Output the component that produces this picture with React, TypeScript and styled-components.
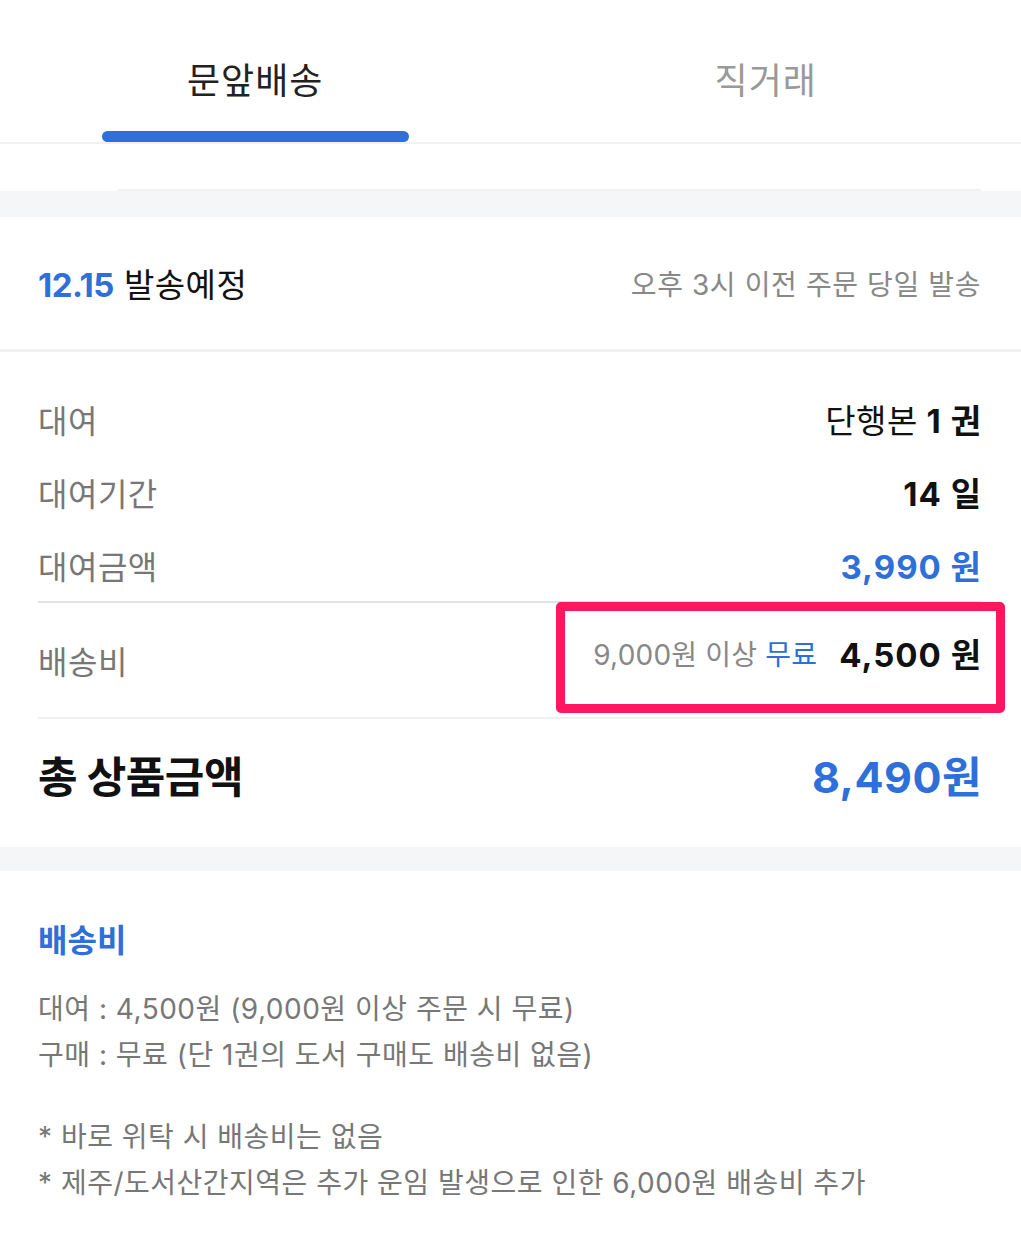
import React from 'react';
import styled, { createGlobalStyle } from 'styled-components';

const GlobalStyle = createGlobalStyle`
  body {
    margin: 0;
    background: #fff;
    font-family: Inter, "Noto Sans CJK KR", sans-serif;
    color: #111;
  }
`

const BLUE = '#2f6fd9'

const Page = styled.div`
  width: 1021px;
  background: #fff;
`

const TabBar = styled.div`
  display: grid;
  grid-template-columns: 1fr 1fr;
  border-bottom: 2px solid #f1f1f3;
`

const Tab = styled.div`
  height: 142px;
  display: flex;
  flex-direction: column;
  align-items: center;
  justify-content: flex-end;
`

const TabLabel = styled.span<{ $active?: boolean }>`
  font-size: 36px;
  letter-spacing: 1px;
  color: ${p => (p.$active ? '#222' : '#999')};
  line-height: 1;
  margin-bottom: 32px;
`

const TabIndicator = styled.div<{ $active?: boolean }>`
  width: 307px;
  height: 11px;
  border-radius: 6px;
  background: ${p => (p.$active ? BLUE : 'transparent')};
`

const TabSpacer = styled.div`
  height: 45px;
  margin-left: 118px;
  margin-right: 40px;
  border-bottom: 2px solid #eef0f3;
`

const Band = styled.div<{ $h: number }>`
  height: ${p => p.$h}px;
  background: #f5f6f8;
`

const ShipRow = styled.div`
  height: 132px;
  padding: 0 40px 0 38px;
  display: flex;
  align-items: center;
  justify-content: space-between;
  border-bottom: 3px solid #f2f2f4;
`

const ShipDate = styled.div`
  font-size: 33px;
  letter-spacing: 0.5px;
  color: #111;
`

const DateNum = styled.span`
  color: ${BLUE};
  font-weight: 700;
  letter-spacing: -0.5px;
  margin-right: 10px;
`

const ShipNote = styled.div`
  font-size: 28px;
  letter-spacing: 0.6px;
  color: #888;
`

const Details = styled.div`
  padding: 30px 39px 0 38px;
`

const Row = styled.div<{ $h: number; $pb?: number }>`
  position: relative;
  height: ${p => p.$h}px;
  padding-bottom: ${p => p.$pb ?? 0}px;
  display: flex;
  align-items: center;
  justify-content: space-between;
`

const Label = styled.span`
  font-size: 32px;
  letter-spacing: 0.5px;
  color: #777;
`

const Value = styled.span<{ $blue?: boolean }>`
  font-size: 33px;
  font-weight: 700;
  letter-spacing: 1px;
  color: ${p => (p.$blue ? BLUE : '#111')};
`

const Thin = styled.span`
  font-weight: 400;
  letter-spacing: 0.5px;
`

const Divider = styled.div<{ $color: string }>`
  height: 2px;
  background: ${p => p.$color};
`

const FeeGroup = styled.div`
  display: flex;
  align-items: center;
  gap: 22px;
  margin-top: -14px;
`

const FeeHint = styled.span`
  font-size: 28px;
  letter-spacing: 0.2px;
  color: #888;
`

const Free = styled.span`
  color: ${BLUE};
`

// red annotation frame drawn over the delivery fee value
const Highlight = styled.div`
  position: absolute;
  top: -1px;
  right: -23px;
  width: 449px;
  height: 111px;
  box-sizing: border-box;
  border: 9px solid #ff1660;
  border-radius: 5px;
  pointer-events: none;
`

const TotalLabel = styled.span`
  font-size: 43px;
  font-weight: 700;
  letter-spacing: -0.5px;
  color: #111;
`

const TotalValue = styled.span`
  font-size: 43px;
  font-weight: 700;
  letter-spacing: 0.5px;
  color: ${BLUE};
`

const Info = styled.div`
  padding: 48px 40px 40px 38px;
`

const InfoTitle = styled.h3`
  margin: 0 0 23px;
  font-size: 32px;
  font-weight: 700;
  letter-spacing: 0px;
  color: ${BLUE};
  line-height: 44px;
`

const InfoBlock = styled.div`
  margin-bottom: 36px;
`

const InfoLine = styled.p`
  margin: 0;
  font-size: 28px;
  line-height: 46px;
  letter-spacing: 0.5px;
  color: #777;
`

const App: React.FC = () => {
  return (
    <Page>
      <GlobalStyle />
      <TabBar>
        <Tab>
          <TabLabel $active>문앞배송</TabLabel>
          <TabIndicator $active />
        </Tab>
        <Tab>
          <TabLabel>직거래</TabLabel>
          <TabIndicator />
        </Tab>
      </TabBar>
      <TabSpacer />
      <Band $h={26} />

      <ShipRow>
        <ShipDate>
          <DateNum>12.15</DateNum>발송예정
        </ShipDate>
        <ShipNote>오후 3시 이전 주문 당일 발송</ShipNote>
      </ShipRow>

      <Details>
        <Row $h={73}>
          <Label>대여</Label>
          <Value><Thin>단행본</Thin> 1 권</Value>
        </Row>
        <Row $h={73}>
          <Label>대여기간</Label>
          <Value>14 일</Value>
        </Row>
        <Row $h={73}>
          <Label>대여금액</Label>
          <Value $blue>3,990 원</Value>
        </Row>
        <Divider $color="#e3e3e3" />
        <Row $h={114}>
          <Label>배송비</Label>
          <FeeGroup>
            <FeeHint>9,000원 이상 <Free>무료</Free></FeeHint>
            <Value>4,500 원</Value>
          </FeeGroup>
          <Highlight />
        </Row>
        <Divider $color="#f0f0f2" />
        <Row $h={110} $pb={18}>
          <TotalLabel>총 상품금액</TotalLabel>
          <TotalValue>8,490원</TotalValue>
        </Row>
      </Details>
      <Band $h={24} />

      <Info>
        <InfoTitle>배송비</InfoTitle>
        <InfoBlock>
          <InfoLine>대여 : 4,500원 (9,000원 이상 주문 시 무료)</InfoLine>
          <InfoLine>구매 : 무료 (단 1권의 도서 구매도 배송비 없음)</InfoLine>
        </InfoBlock>
        <InfoLine>* 바로 위탁 시 배송비는 없음</InfoLine>
        <InfoLine>* 제주/도서산간지역은 추가 운임 발생으로 인한 6,000원 배송비 추가</InfoLine>
      </Info>
    </Page>
  );
}

export default App;
